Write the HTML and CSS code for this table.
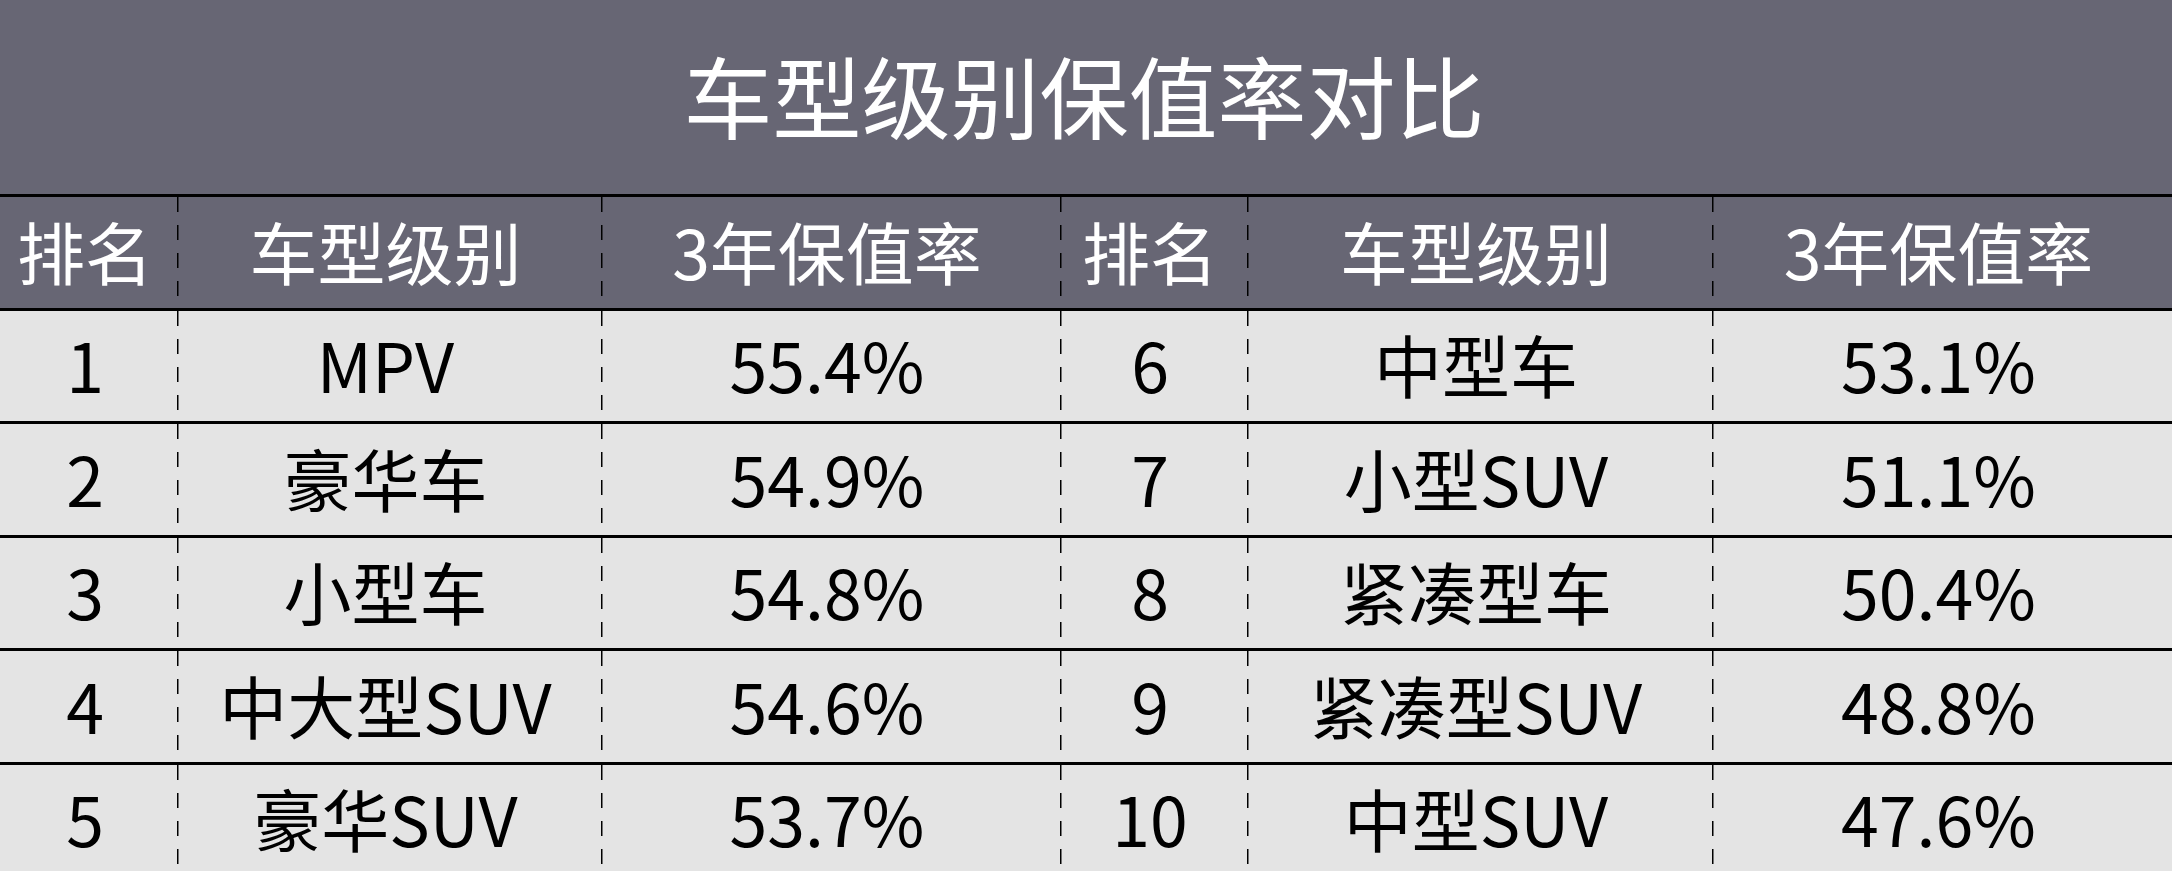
FILE: index.html
```html
<!DOCTYPE html>
<html lang="zh-CN">
<head>
<meta charset="utf-8">
<title>车型级别保值率对比</title>
<link rel="stylesheet" href="styles.css">
</head>
<body>
<div class="page">
  <div class="title">车型级别保值率对比</div>
  <div class="table">
    <div class="row head">
      <div class="cell">排名</div><div class="cell dl">车型级别</div><div class="cell dl">3年保值率</div>
      <div class="cell dl">排名</div><div class="cell dl">车型级别</div><div class="cell dl">3年保值率</div>
    </div>
    <div class="row">
      <div class="cell">1</div><div class="cell dl">MPV</div><div class="cell dl">55.4%</div>
      <div class="cell dl">6</div><div class="cell dl">中型车</div><div class="cell dl">53.1%</div>
    </div>
    <div class="row">
      <div class="cell">2</div><div class="cell dl">豪华车</div><div class="cell dl">54.9%</div>
      <div class="cell dl">7</div><div class="cell dl">小型SUV</div><div class="cell dl">51.1%</div>
    </div>
    <div class="row">
      <div class="cell">3</div><div class="cell dl">小型车</div><div class="cell dl">54.8%</div>
      <div class="cell dl">8</div><div class="cell dl">紧凑型车</div><div class="cell dl">50.4%</div>
    </div>
    <div class="row">
      <div class="cell">4</div><div class="cell dl">中大型SUV</div><div class="cell dl">54.6%</div>
      <div class="cell dl">9</div><div class="cell dl">紧凑型SUV</div><div class="cell dl">48.8%</div>
    </div>
    <div class="row">
      <div class="cell">5</div><div class="cell dl">豪华SUV</div><div class="cell dl">53.7%</div>
      <div class="cell dl">10</div><div class="cell dl">中型SUV</div><div class="cell dl">47.6%</div>
    </div>
  </div>
</div>
</body>
</html>
```
FILE: styles.css
```css
html, body {
  margin: 0;
  padding: 0;
  background: #e4e4e4;
  overflow: hidden;
}
.page {
  width: 2172px;
  height: 871px;
  overflow: hidden;
  font-family: "Noto Sans CJK SC", "Noto Sans", sans-serif;
}
.title {
  height: 194px;
  box-sizing: border-box;
  padding-bottom: 8px;
  padding-right: 4px;
  background: #676674;
  color: #ffffff;
  font-size: 89px;
  display: flex;
  align-items: center;
  justify-content: center;
}
.table {
  display: flex;
  flex-direction: column;
}
.row {
  display: grid;
  grid-template-columns: 177px 424px 459px 187px 465px 460px;
  height: 113.5px;
  box-sizing: border-box;
  border-top: 3px solid #000;
  background: #e4e4e4;
  color: #000;
  flex: none;
}
.row.head {
  background: #676674;
  color: #ffffff;
}
.cell {
  display: flex;
  align-items: center;
  justify-content: center;
  font-size: 68px;
  line-height: 1;
  padding-bottom: 3px;
  padding-right: 7px;
  box-sizing: border-box;
}
.dl {
  background-image: repeating-linear-gradient(to bottom, #000 0 15px, transparent 15px 28px);
  background-size: 1.5px 100%;
  background-repeat: no-repeat;
  background-position: left top;
}
```
